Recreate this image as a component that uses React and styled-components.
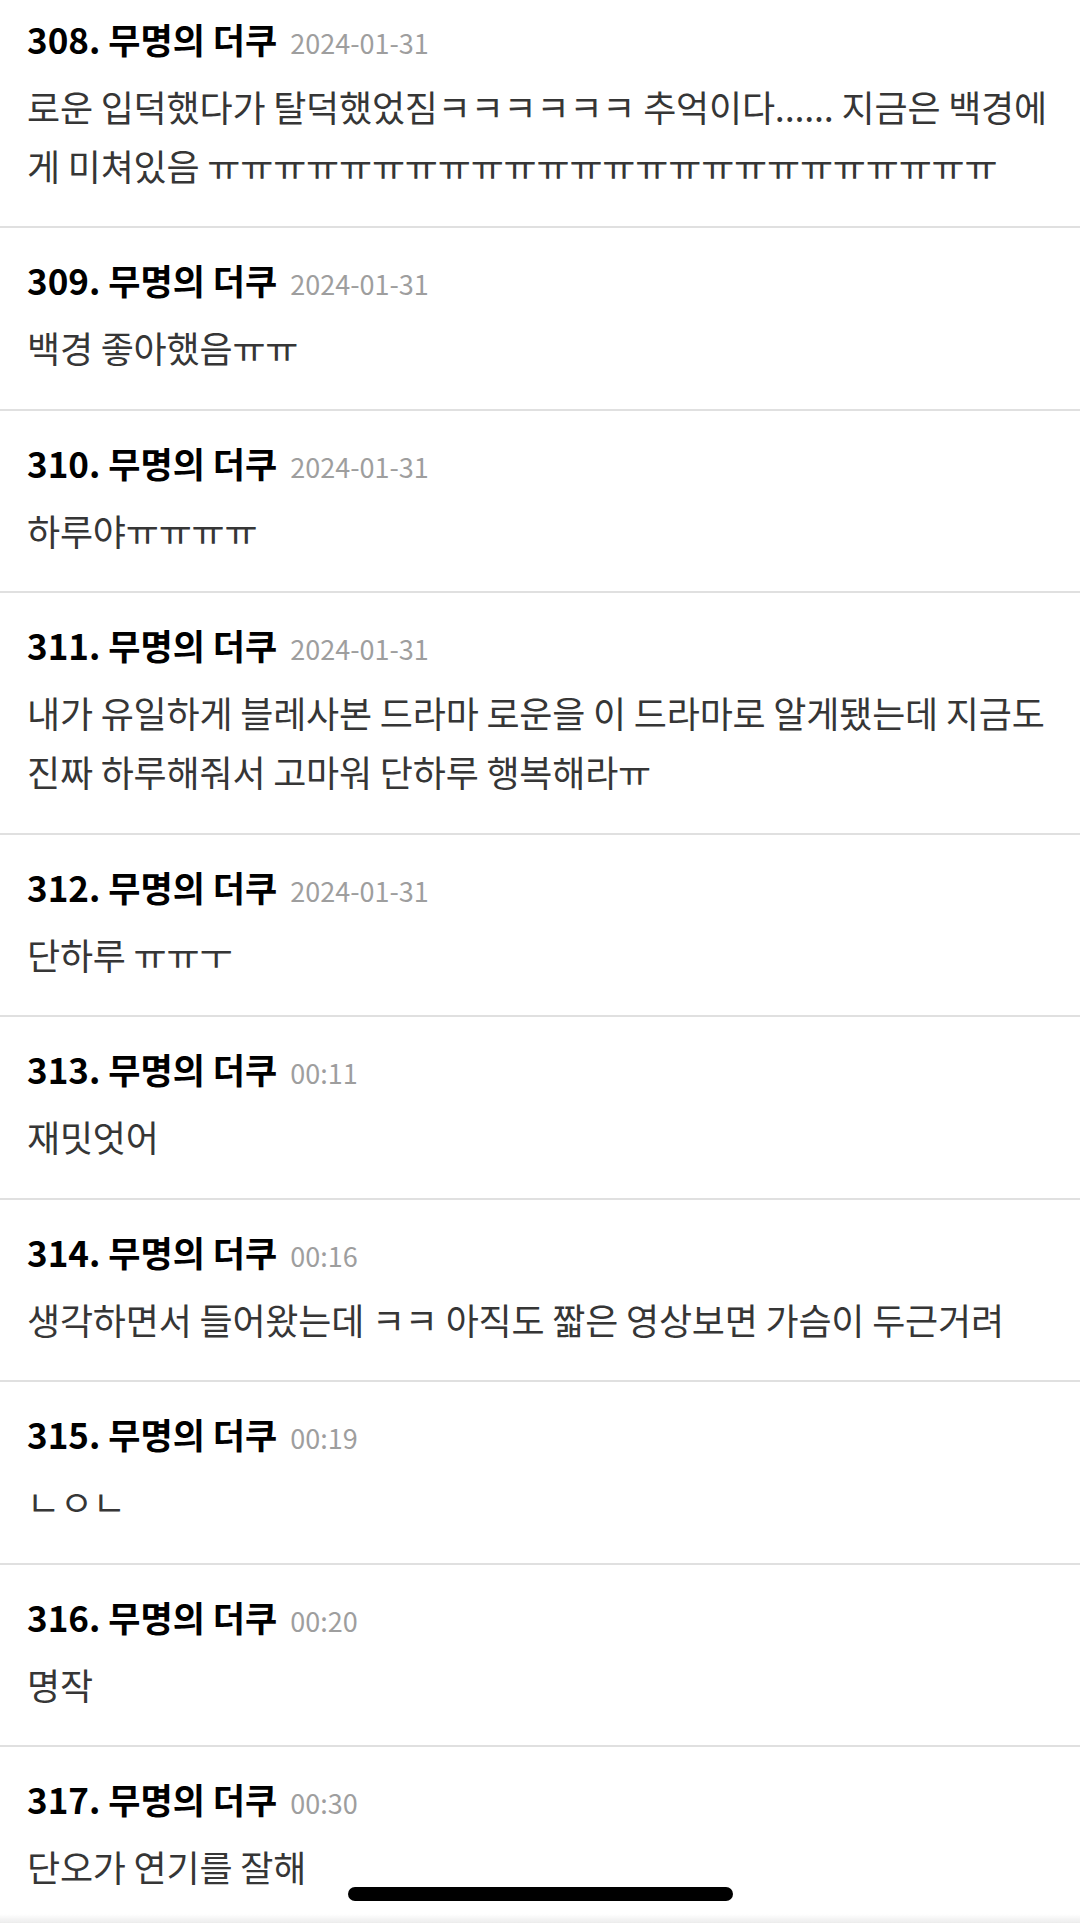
import React from 'react';
import styled, { createGlobalStyle } from 'styled-components';

const GlobalStyle = createGlobalStyle`
  html, body {
    margin: 0;
    padding: 0;
    background: #ffffff;
  }
  body {
    font-family: "Noto Sans CJK KR", "Noto Sans", sans-serif;
    -webkit-font-smoothing: antialiased;
    overflow: hidden;
  }
`;

const Page = styled.div`
  width: 1080px;
  min-height: 1923px;
  background: #ffffff;
  overflow: hidden;
`;

const CommentList = styled.ul`
  list-style: none;
  margin: -13.5px 0 0 0;
  padding: 0;
`;

const CommentRow = styled.li`
  padding: 30px 18px 31.5px 27px;
  border-bottom: 2px solid #e0e0e0;
`;

const CommentHeader = styled.div`
  font-size: 35px;
  line-height: 44px;
  height: 44px;
  white-space: nowrap;
`;

const Author = styled.span`
  font-weight: 700;
  color: #000000;
`;

const Time = styled.span`
  margin-left: 13px;
  font-size: 27px;
  line-height: 1;
  font-weight: 400;
  color: #9e9e9e;
`;

const Body = styled.p`
  margin: 16px 0 0 0;
  font-size: 36px;
  line-height: 59px;
  letter-spacing: -0.2px;
  color: #363636;
  word-break: normal;
  overflow-wrap: anywhere;
`;

const HomeIndicator = styled.div`
  position: fixed;
  left: 50%;
  bottom: 22px;
  width: 385px;
  height: 14px;
  margin-left: -192px;
  border-radius: 7px;
  background: #000000;
`;

const BottomEdge = styled.div`
  position: fixed;
  left: 0;
  right: 0;
  bottom: 0;
  height: 9px;
  background: linear-gradient(to bottom, rgba(235, 235, 235, 0), #ececec);
`;

const comments = [
  {
    no: 308,
    time: '2024-01-31',
    text: '로운 입덕했다가 탈덕했었짐ㅋㅋㅋㅋㅋㅋ 추억이다...... 지금은 백경에게 미쳐있음 ' + 'ㅠ'.repeat(24),
  },
  { no: 309, time: '2024-01-31', text: '백경 좋아했음ㅠㅠ' },
  { no: 310, time: '2024-01-31', text: '하루야ㅠㅠㅠㅠ' },
  {
    no: 311,
    time: '2024-01-31',
    text: '내가 유일하게 블레사본 드라마 로운을 이 드라마로 알게됐는데 지금도 진짜 하루해줘서 고마워 단하루 행복해라ㅠ',
  },
  { no: 312, time: '2024-01-31', text: '단하루 ㅠㅠㅜ' },
  { no: 313, time: '00:11', text: '재밋엇어' },
  { no: 314, time: '00:16', text: '생각하면서 들어왔는데 ㅋㅋ 아직도 짧은 영상보면 가슴이 두근거려' },
  { no: 315, time: '00:19', text: 'ㄴㅇㄴ' },
  { no: 316, time: '00:20', text: '명작' },
  { no: 317, time: '00:30', text: '단오가 연기를 잘해' },
];

const App = () => {
  return (
    <Page>
      <GlobalStyle />
      <CommentList>
        {comments.map(c => (
          <CommentRow key={c.no}>
            <CommentHeader>
              <Author>{c.no}. 무명의 더쿠</Author>
              <Time>{c.time}</Time>
            </CommentHeader>
            <Body>{c.text}</Body>
          </CommentRow>
        ))}
      </CommentList>
      <BottomEdge />
      <HomeIndicator />
    </Page>
  );
};

export default App;
